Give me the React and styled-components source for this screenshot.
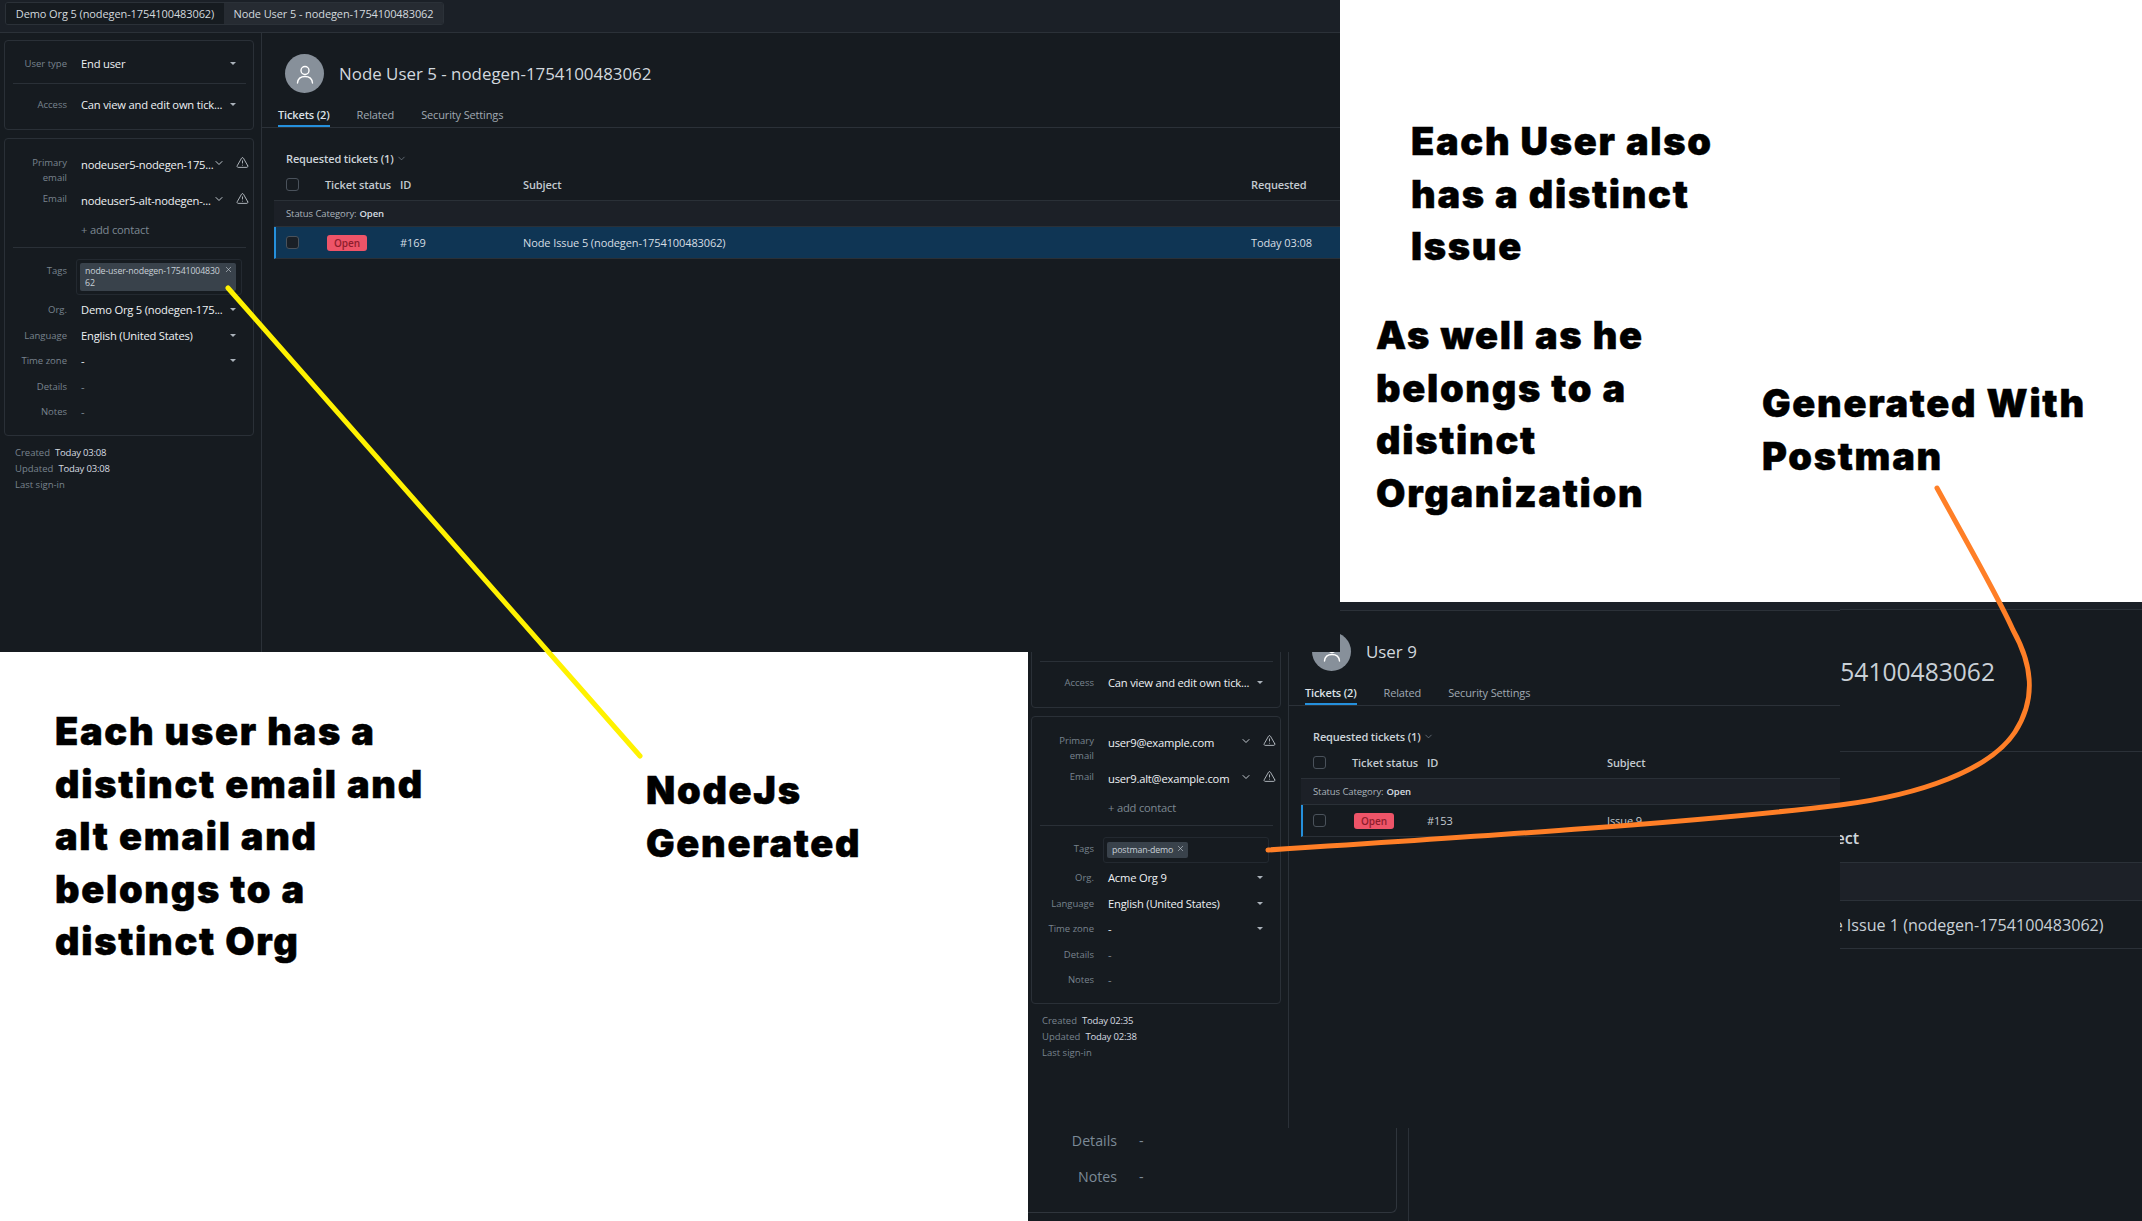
import React from "react";
import styled, { createGlobalStyle } from "styled-components";
import { ChevronDown, TriangleAlert, X } from "lucide-react";

const GlobalStyle = createGlobalStyle`
  html, body {
    margin: 0;
    padding: 0;
    background: #fff;
  }
  * {
    box-sizing: border-box;
  }
`;

const Page = styled.div`
  position: relative;
  width: 2142px;
  height: 1221px;
  overflow: hidden;
  background: #fff;
  font-family: "Open Sans", "Noto Sans", sans-serif;
`;

// every screenshot pasted in the collage is a window on a free canvas
const Shot = styled.section`
  position: absolute;
  left: ${(p) => p.$x}px;
  top: ${(p) => p.$y}px;
  width: ${(p) => p.$w}px;
  height: ${(p) => p.$h}px;
  z-index: ${(p) => p.$z};
  overflow: hidden;
  display: flex;
  flex-direction: column;
  background: #161b20;
  color: #d5dbe1;
`;

const WhiteSheet = styled.div`
  position: absolute;
  left: 1340px;
  top: 0;
  width: 802px;
  height: 602px;
  z-index: 3;
  background: #fff;
`;

const TabStrip = styled.div`
  flex: none;
  height: 33px;
  padding-top: 1px;
  padding-left: 5px;
  background: #1b2027;
  border-bottom: 1px solid #2b3138;
`;

const TabGroup = styled.div`
  display: inline-flex;
  height: 23px;
  border: 1px solid #2b3138;
  border-radius: 3px;
  overflow: hidden;
`;

const TabItem = styled.div`
  width: ${(p) => p.$w}px;
  line-height: 21px;
  text-align: center;
  font-size: 11px;
  letter-spacing: -0.1px;
  color: #d3d9de;
  background: ${(p) => (p.$active ? "#262b32" : "#161b20")};
`;

const Split = styled.div`
  flex: 1;
  min-height: 0;
  display: flex;
  margin-left: ${(p) => p.$shift || 0}px;
`;

const Sidebar = styled.aside`
  flex: none;
  width: 262px;
  padding: 7px 7px 0 4px;
  border-right: 1px solid #2b3138;
`;

const Card = styled.div`
  padding: ${(p) => (p.$tall ? "12px 7px 10px 8px" : "10px 7px 12px 8px")};
  margin-bottom: 8px;
  border: 1px solid #2a3037;
  border-radius: 4px;
`;

const Divider = styled.div`
  height: 1px;
  margin: ${(p) => p.$margin};
  background: #2a3037;
`;

const Row = styled.div`
  display: grid;
  grid-template-columns: 54px minmax(0, 1fr);
  column-gap: 14px;
  min-height: ${(p) => p.$h || 25.5}px;
  align-items: ${(p) => (p.$top ? "start" : "center")};
  margin-top: ${(p) => p.$mt || 0}px;
`;

const Label = styled.div`
  text-align: right;
  font-size: 9.5px;
  line-height: 15px;
  color: #78838e;
  padding-top: ${(p) => (p.$top ? 4 : 0)}px;
`;

const Field = styled.div`
  display: flex;
  align-items: center;
  justify-content: space-between;
  height: ${(p) => (p.$top ? "26px" : "auto")};
  padding-right: ${(p) => (p.$top ? 0 : 10)}px;
  font-size: 11.2px;
  letter-spacing: -0.2px;
  white-space: nowrap;
  color: ${(p) => (p.$dim ? "#7d8892" : "#eef1f4")};
`;

const MailText = styled.span`
  flex: 1;
  min-width: 0;
`;

const MailIcons = styled.span`
  flex: none;
  display: flex;
  align-items: center;
  gap: 11px;
  color: #c3cad0;
  margin: -3px -3px 0 0;
`;

const Caret = styled.i`
  display: block;
  width: 0;
  height: 0;
  border-left: 3px solid transparent;
  border-right: 3px solid transparent;
  border-top: 3px solid #aab2ba;
`;

const TagBox = styled.div`
  display: flex;
  align-items: center;
  min-height: 26px;
  padding: 3px;
  margin-left: -5px;
  margin-right: 4px;
  border: 1px solid #232930;
  border-radius: 3px;
`;

const Chip = styled.div`
  display: flex;
  align-items: flex-start;
  gap: 2px;
  padding: 2px 3px 2px 5px;
  border-radius: 2px;
  background: #39424b;
  color: #c8d0d7;
  font-size: 8.8px;
  line-height: 12px;
  letter-spacing: -0.15px;
  word-break: break-all;
`;

const ChipText = styled.span`
  width: ${(p) => p.$w}px;
`;

const Meta = styled.div`
  padding: 1px 0 0 11px;
  font-size: 9.5px;
  line-height: 16px;
  color: #78838e;
`;

const MetaValue = styled.b`
  margin-left: 5px;
  font-weight: 500;
  letter-spacing: -0.2px;
  color: #d6dce1;
`;

const Main = styled.main`
  flex: 1;
  min-width: 0;
`;

const Header = styled.header`
  display: flex;
  align-items: center;
  gap: 15px;
  padding: 21px 0 0 23px;
`;

const Avatar = styled.div`
  flex: none;
  width: 39px;
  height: 39px;
  border-radius: 50%;
  display: flex;
  align-items: center;
  justify-content: center;
  background: #87909a;
`;

const Title = styled.h1`
  margin: 0;
  font-size: 16.9px;
  font-weight: 400;
  white-space: nowrap;
  color: #d2d8de;
`;

const Tabs = styled.nav`
  display: flex;
  gap: 27px;
  margin-top: 9px;
  padding-left: 16px;
  border-bottom: 1px solid #2b3138;
`;

const TabLink = styled.span`
  height: 25px;
  line-height: 25px;
  font-size: 11px;
  letter-spacing: -0.15px;
  font-weight: ${(p) => (p.$active ? 600 : 400)};
  color: ${(p) => (p.$active ? "#dde2e7" : "#a0a9b2")};
  border-bottom: 2px solid ${(p) => (p.$active ? "#2590dc" : "transparent")};
`;

const ViewToggle = styled.div`
  display: flex;
  align-items: center;
  gap: 3px;
  height: 20px;
  margin: 20px 0 0 24px;
  font-size: 11px;
  font-weight: 600;
  letter-spacing: -0.15px;
  color: #ccd3d9;
`;

const Table = styled.div`
  margin: 4px 0 0 12px;
`;

const GridRow = styled.div`
  display: grid;
  grid-template-columns: 39px 75px ${(p) => p.$idCol}px 728px 1fr;
  align-items: center;
  height: ${(p) => p.$h}px;
  padding-left: ${(p) => (p.$bar ? 10 : 12)}px;
  padding-bottom: ${(p) => (p.$head ? 3 : 0)}px;
  font-size: 11px;
  letter-spacing: -0.1px;
  white-space: nowrap;
  border-bottom: 1px solid #2a3037;
  border-left: ${(p) => (p.$bar ? "2px solid #2590dc" : "none")};
  background: ${(p) => (p.$selected ? "#0f3554" : "transparent")};
  color: ${(p) => (p.$selected ? "#d6dde3" : "#c3cad0")};
  font-weight: ${(p) => (p.$head ? 600 : 400)};
`;

const GroupBand = styled.div`
  display: flex;
  align-items: center;
  gap: 3px;
  height: 26px;
  padding-left: 12px;
  background: #1c2027;
  border-bottom: 1px solid #2a3037;
  font-size: 9.5px;
  letter-spacing: -0.1px;
  color: #aab3bb;
`;

const BandValue = styled.b`
  font-weight: 600;
  color: #d6dce1;
`;

const CheckBox = styled.span`
  display: block;
  width: 13px;
  height: 13px;
  border: 1.5px solid #4a525b;
  border-radius: 3px;
  background: ${(p) => (p.$fill ? "#1a2027" : "transparent")};
`;

const StatusPill = styled.span`
  display: block;
  width: 40px;
  height: 16px;
  margin-left: 2px;
  border-radius: 3px;
  background: #ee5468;
  color: #8d1d2c;
  font-size: 10px;
  font-weight: 600;
  line-height: 16px;
  text-align: center;
`;

const FarStrip = styled.div`
  flex: none;
  height: 8px;
  background: #1b2027;
  border-bottom: 1px solid #2b3138;
`;

const FarSidebar = styled.aside`
  flex: none;
  width: 381px;
  padding: 0 11px 8px 0;
  display: flex;
  align-items: flex-end;
  border-right: 1px solid #2b3138;
`;

const FarCard = styled.div`
  flex: 1;
  margin-left: -10px;
  padding: 0 0 18px 10px;
  border: 1px solid #2f353c;
  border-top: none;
  border-radius: 0 0 6px 6px;
`;

const FarRow = styled.div`
  display: grid;
  grid-template-columns: 88px 1fr;
  column-gap: 22px;
  align-items: center;
  height: 36px;
  font-size: 14.2px;
  color: #7c8a97;
`;

const FarLabel = styled.span`
  text-align: right;
`;

const FarTitle = styled.div`
  display: flex;
  align-items: center;
  justify-content: flex-end;
  height: 142px;
  padding: 0 147px 19px 0;
  font-size: 24.6px;
  color: #c9d0d6;
  white-space: nowrap;
  border-bottom: 1px solid #2b3138;
`;

const FarHead = styled.div`
  display: flex;
  align-items: flex-end;
  height: 111px;
  padding: 0 0 12px 393px;
  font-size: 16.1px;
  line-height: 24px;
  font-weight: 600;
  color: #d0d6dc;
  border-bottom: 1px solid #2b3138;
`;

const FarBand = styled.div`
  height: 38px;
  background: #1d2128;
  border-bottom: 1px solid #2b3138;
`;

const FarTicket = styled.div`
  display: flex;
  align-items: center;
  height: 48px;
  padding-left: 393px;
  font-size: 16.1px;
  color: #c9d0d6;
  white-space: nowrap;
  border-bottom: 1px solid #2b3138;
`;

const Note = styled.div`
  position: absolute;
  left: ${(p) => p.$x}px;
  top: ${(p) => p.$y}px;
  z-index: 5;
  font-family: "Inter", "Liberation Sans", sans-serif;
  font-size: 38px;
  font-weight: 900;
  line-height: 52.5px;
  letter-spacing: 1.7px;
  -webkit-text-stroke: 0.5px #000;
  white-space: pre;
  color: #000;
`;

const ArrowLayer = styled.svg`
  position: absolute;
  left: 0;
  top: 0;
  z-index: 6;
  pointer-events: none;
`;

const UserGlyph = () => (
  <svg width="22" height="22" viewBox="0 0 22 22" fill="none" stroke="#fff" strokeWidth="1.4" strokeLinecap="round">
    <circle cx="11" cy="7.5" r="4" />
    <path d="M3.5 20c.4-4.4 3.6-6.5 7.5-6.5s7.100 2.100 7.500 6.500" />
  </svg>
);

const SelectRow = ({ label, value, dim, mt, h }) => (
  <Row $mt={mt} $h={h}>
    <Label>{label}</Label>
    <Field $dim={dim}>
      <span>{value}</span>
      {!dim && <Caret />}
    </Field>
  </Row>
);

const MailRow = ({ label, value, h }) => (
  <Row $top $h={h}>
    <Label $top>{label}</Label>
    <Field $top>
      <MailText>{value}</MailText>
      <MailIcons>
        <ChevronDown size={12} strokeWidth={2} />
        <TriangleAlert size={13} strokeWidth={1.6} />
      </MailIcons>
    </Field>
  </Row>
);

const TicketWindow = ({ x, y, w, h, z, shift, tabs, title, user, tag, tagWidth, ticket, idCol, selected, requested }) => (
  <Shot $x={x} $y={y} $w={w} $h={h} $z={z}>
    <TabStrip>
      {tabs && (
        <TabGroup>
          {tabs.map((tab, i) => (
            <TabItem key={tab} $w={i === 0 ? 218 : 219} $active={i === 1}>
              {tab}
            </TabItem>
          ))}
        </TabGroup>
      )}
    </TabStrip>
    <Split $shift={shift}>
      <Sidebar>
        <Card>
          <SelectRow label="User type" value="End user" h={25} />
          <Divider $margin="7px 0 8px" />
          <SelectRow label="Access" value="Can view and edit own tick..." h={25} />
        </Card>
        <Card $tall>
          <MailRow label="Primary email" value={user.primary} h={36} />
          <MailRow label="Email" value={user.alt} h={26} />
          <Row $h={26} $mt={3}>
            <span />
            <Field $dim>+ add contact</Field>
          </Row>
          <Divider $margin="5px 0 11px" />
          <Row $top>
            <Label $top>Tags</Label>
            <TagBox>
              <Chip>
                <ChipText $w={tagWidth}>{tag}</ChipText>
                <X size={9} strokeWidth={1.6} />
              </Chip>
            </TagBox>
          </Row>
          <SelectRow label="Org." value={user.org} mt={2} />
          <SelectRow label="Language" value="English (United States)" />
          <SelectRow label="Time zone" value="-" />
          <SelectRow label="Details" value="-" dim />
          <SelectRow label="Notes" value="-" dim />
        </Card>
        <Meta>
          <div>
            Created<MetaValue>{user.created}</MetaValue>
          </div>
          <div>
            Updated<MetaValue>{user.updated}</MetaValue>
          </div>
          <div>Last sign-in</div>
        </Meta>
      </Sidebar>
      <Main>
        <Header>
          <Avatar>
            <UserGlyph />
          </Avatar>
          <Title>{title}</Title>
        </Header>
        <Tabs>
          <TabLink $active>Tickets (2)</TabLink>
          <TabLink>Related</TabLink>
          <TabLink>Security Settings</TabLink>
        </Tabs>
        <ViewToggle>
          Requested tickets (1)
          <ChevronDown size={11} strokeWidth={1.5} color="#7d8892" />
        </ViewToggle>
        <Table>
          <GridRow $head $h={29} $idCol={idCol}>
            <CheckBox />
            <span>Ticket status</span>
            <span>ID</span>
            <span>Subject</span>
            {requested && <span>Requested</span>}
          </GridRow>
          <GroupBand>
            Status Category: <BandValue>Open</BandValue>
          </GroupBand>
          <GridRow $bar $h={32} $idCol={idCol} $selected={selected}>
            <CheckBox $fill={selected} />
            <StatusPill>Open</StatusPill>
            <span>{ticket.id}</span>
            <span>{ticket.subject}</span>
            {requested && <span>{ticket.time}</span>}
          </GridRow>
        </Table>
      </Main>
    </Split>
  </Shot>
);

const FarWindow = () => (
  <Shot $x={1028} $y={602} $w={1114} $h={619} $z={1}>
    <FarStrip />
    <Split>
      <FarSidebar>
        <FarCard>
          <FarRow>
            <FarLabel>Details</FarLabel>
            <span>-</span>
          </FarRow>
          <FarRow>
            <FarLabel>Notes</FarLabel>
            <span>-</span>
          </FarRow>
        </FarCard>
      </FarSidebar>
      <Main>
        <FarTitle>Node User 1 - nodegen-1754100483062</FarTitle>
        <FarHead>Subject</FarHead>
        <FarBand />
        <FarTicket>Node Issue 1 (nodegen-1754100483062)</FarTicket>
      </Main>
    </Split>
  </Shot>
);

export default function App() {
  return (
    <>
      <GlobalStyle />
      <Page>
        <FarWindow />
        <TicketWindow
          x={1028}
          y={578}
          w={812}
          h={550}
          z={2}
          shift={-1}
          title="User 9"
          user={{
            primary: "user9@example.com",
            alt: "user9.alt@example.com",
            org: "Acme Org 9",
            created: "Today 02:35",
            updated: "Today 02:38",
          }}
          tag="postman-demo"
          tagWidth={62}
          ticket={{ id: "#153", subject: "Issue 9" }}
          idCol={180}
        />
        <TicketWindow
          x={0}
          y={0}
          w={1340}
          h={652}
          z={3}
          tabs={["Demo Org 5 (nodegen-1754100483062)", "Node User 5 - nodegen-1754100483062"]}
          title="Node User 5 - nodegen-1754100483062"
          user={{
            primary: "nodeuser5-nodegen-175...",
            alt: "nodeuser5-alt-nodegen-...",
            org: "Demo Org 5 (nodegen-175...",
            created: "Today 03:08",
            updated: "Today 03:08",
          }}
          tag="node-user-nodegen-1754100483062"
          tagWidth={137}
          ticket={{ id: "#169", subject: "Node Issue 5 (nodegen-1754100483062)", time: "Today 03:08" }}
          idCol={123}
          selected
          requested
        />
        <WhiteSheet />
        <Note $x={1411} $y={115}>{"Each User also\nhas a distinct\nIssue"}</Note>
        <Note $x={1376} $y={309}>{"As well as he\nbelongs to a\ndistinct\nOrganization"}</Note>
        <Note $x={1762} $y={377}>{"Generated With\nPostman"}</Note>
        <Note $x={55} $y={705}>{"Each user has a\ndistinct email and\nalt email and\nbelongs to a\ndistinct Org"}</Note>
        <Note $x={646} $y={764}>{"NodeJs\nGenerated"}</Note>
        <ArrowLayer width="2142" height="1221" viewBox="0 0 2142 1221" fill="none" strokeLinecap="round">
          <path d="M228 288L640 756" stroke="#fff200" strokeWidth="5" />
          <path
            d="M1268 850C1500 835 1700 822 1840 805C1920 795 1990 770 2015 732C2037 698 2032 664 2013 630C2000 600 1960 530 1937 488"
            stroke="#ff7f27"
            strokeWidth="5"
          />
        </ArrowLayer>
      </Page>
    </>
  );
}
